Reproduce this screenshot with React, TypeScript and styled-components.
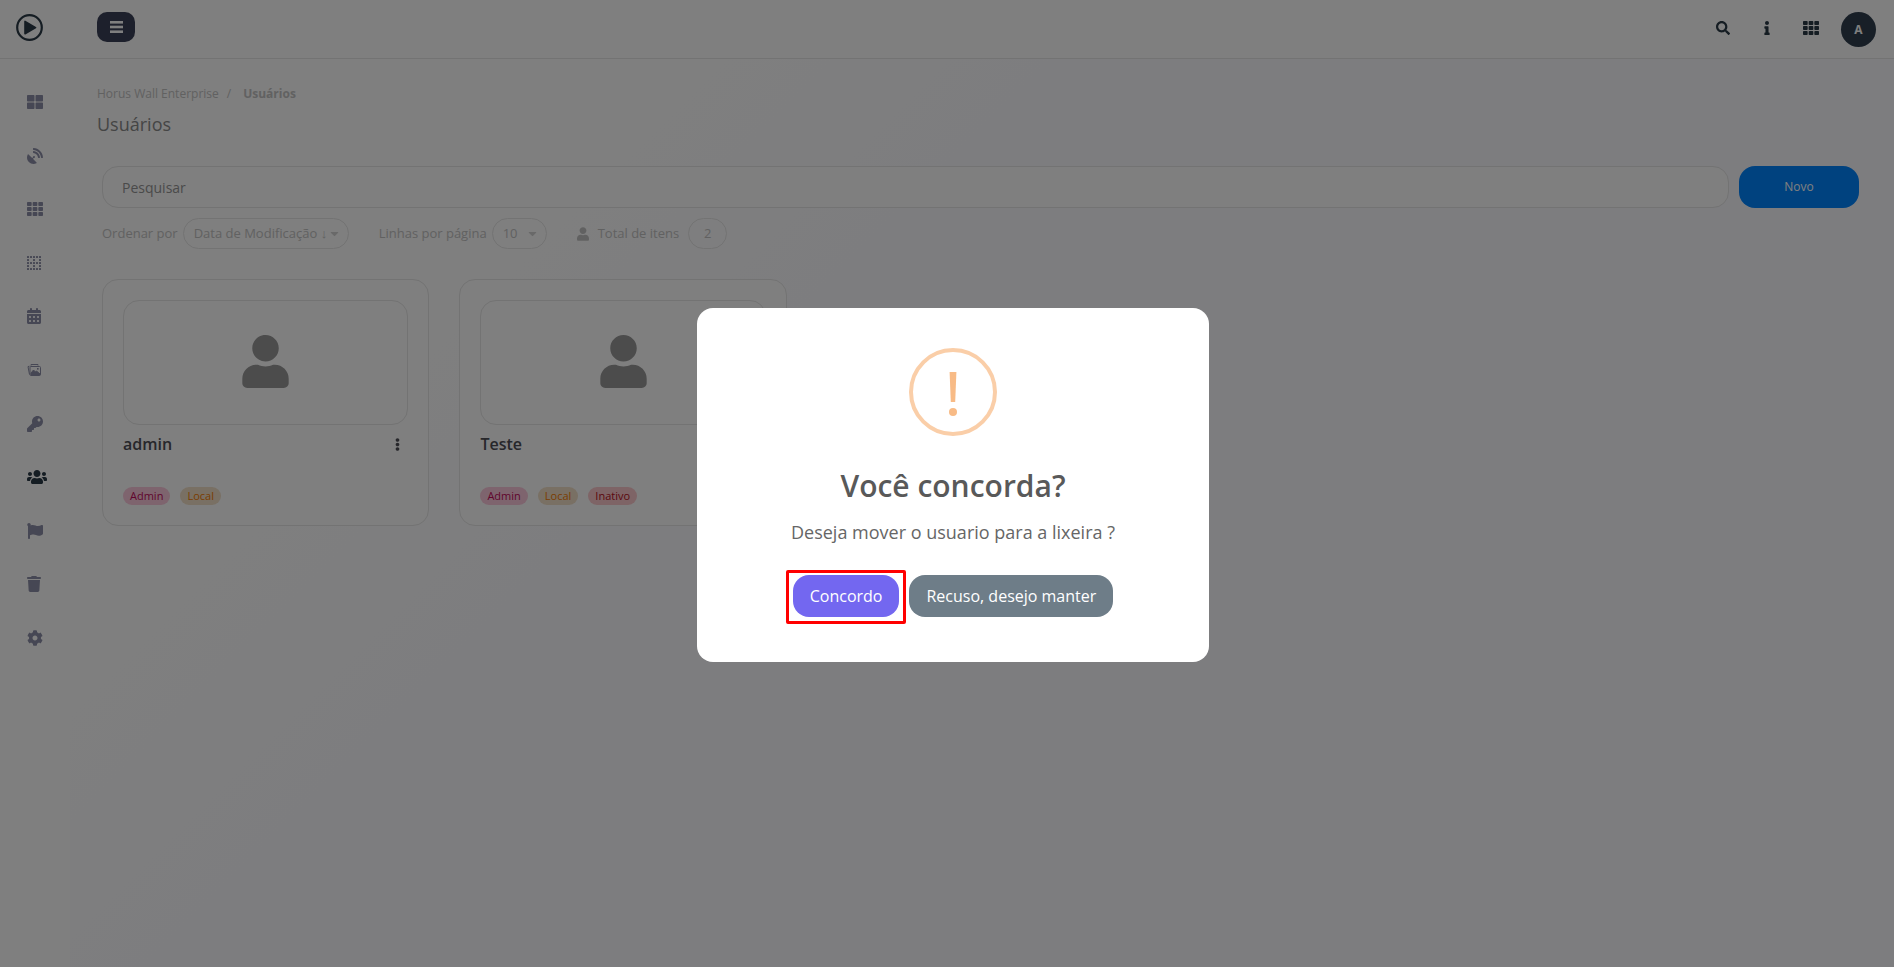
import React from "react";
import styled, { createGlobalStyle } from "styled-components";
import {
  FaBorderNone,
  FaCaretDown,
  FaCog,
  FaEllipsisV,
  FaFlag,
  FaInfo,
  FaKey,
  FaSatelliteDish,
  FaSearch,
  FaTh,
  FaThLarge,
  FaUser,
  FaUsers,
} from "react-icons/fa";
import { FaCalendarDays, FaTrash } from "react-icons/fa6";

const Global = createGlobalStyle`
  * { box-sizing: border-box; }
  body {
    margin: 0;
    font-family: "Open Sans", sans-serif;
    background: #fefefe;
  }
  button, input, select { font-family: inherit; }
`;

const Page = styled.div`
  min-height: 100vh;
  display: flex;
  flex-direction: column;
`;

const Header = styled.header`
  display: flex;
  align-items: center;
  height: 59px;
  padding: 0 18px 0 16px;
  background: #fefefe;
  border-bottom: 1px solid #e6e6e6;
`;

const Logo = styled.svg`
  width: 27px;
  height: 27px;
  margin-bottom: 4px;
  color: #2b3a47;
`;

const MenuButton = styled.button`
  width: 38px;
  height: 30px;
  margin: 0 auto 4px 54px;
  padding: 0;
  display: grid;
  place-items: center;
  border: 0;
  border-radius: 10px;
  background: #3b4158;
  color: #fff;
  svg { width: 13px; height: 12px; }
`;

const Tool = styled.button<{ $size: number }>`
  display: grid;
  place-items: center;
  width: 44px;
  height: 40px;
  padding: 0 0 2px;
  border: 0;
  background: none;
  color: #2b3a47;
  font-size: ${(p) => p.$size}px;
`;

const Avatar = styled.button`
  width: 35px;
  height: 35px;
  margin-left: 8px;
  padding: 0;
  border: 0;
  border-radius: 50%;
  background: #303f4f;
  color: #fff;
  font-size: 12px;
  font-weight: 700;
`;

const Body = styled.div`
  flex: 1;
  display: flex;
`;

const Sidebar = styled.nav`
  width: 70px;
  flex: none;
`;

const SideList = styled.ul`
  display: flex;
  flex-direction: column;
  justify-content: space-between;
  height: 568px;
  margin: 27px 0 0;
  padding: 0 0 0 27px;
  list-style: none;
`;

const SideLink = styled.a<{ $active?: boolean; $width: number }>`
  display: flex;
  align-items: center;
  height: 32px;
  color: ${(p) => (p.$active ? "#2b3a47" : "#8d8fa8")};
  svg { width: ${(p) => p.$width}px; height: 16px; }
`;

const Main = styled.main`
  flex: 1;
  min-width: 0;
  padding: 25px 35px 24px 27px;
  background: linear-gradient(135deg, #fefefe 24%, #fafaff 40%);
`;

const Crumbs = styled.nav`
  display: flex;
  gap: 8px;
  font-size: 12px;
  line-height: 20px;
  color: #c3c3c3;
  a { color: inherit; text-decoration: none; }
  strong { margin-left: 4px; }
`;

const Title = styled.h1`
  margin: 8px 0 30px;
  font-size: 18px;
  line-height: 24px;
  font-weight: 400;
  color: #8b8b8b;
`;

const Content = styled.div`
  padding-left: 5px;
`;

const SearchRow = styled.div`
  display: flex;
  gap: 10px;
`;

const SearchInput = styled.input`
  flex: 1;
  min-width: 0;
  height: 42px;
  padding: 0 19px;
  border: 1px solid #e6e6e6;
  border-radius: 16px;
  background: #fefefe;
  font-size: 14px;
  &::placeholder { color: #959595; opacity: 1; }
`;

const NewButton = styled.button`
  width: 120px;
  height: 42px;
  padding: 0 0 2px;
  border: 0;
  border-radius: 16px;
  background: #0084fe;
  color: #fff;
  font-size: 12px;
`;

const Filters = styled.div`
  display: flex;
  gap: 30px;
  margin-top: 10px;
  font-size: 13px;
  line-height: 20px;
  color: #c3c3c3;
`;

const Field = styled.div`
  display: flex;
  align-items: center;
  gap: 5px;
  label { height: 22px; }
`;

const SelectBox = styled.div`
  position: relative;
  height: 31px;
  svg {
    position: absolute;
    right: 8px;
    top: 9px;
    color: #d2d2d2;
    pointer-events: none;
  }
`;

const Select = styled.select<{ $width: number }>`
  appearance: none;
  display: block;
  width: ${(p) => p.$width}px;
  height: 31px;
  padding: 0 10px 1px;
  border: 1px solid #e6e6e6;
  border-radius: 16px;
  background: transparent;
  font-size: 13px;
  color: inherit;
`;

const Total = styled.div`
  display: flex;
  align-items: center;
  gap: 9px;
  svg { width: 12px; height: 14px; }
`;

const TotalLabel = styled.span`
  height: 22px;
`;

const Count = styled.span`
  width: 39px;
  height: 31px;
  display: grid;
  place-items: center;
  padding-bottom: 1px;
  border: 1px solid #e6e6e6;
  border-radius: 16px;
`;

const Cards = styled.div`
  display: grid;
  grid-template-columns: repeat(5, minmax(0, 1fr));
  column-gap: 30px;
  margin-top: 30px;
`;

const Card = styled.article`
  padding: 20px;
  border: 1px solid #e6e6e6;
  border-radius: 16px;
  background: #fefefe;
`;

const Photo = styled.div`
  height: 125px;
  display: grid;
  place-items: center;
  padding-bottom: 2px;
  border: 1px solid #e6e6e6;
  border-radius: 16px;
  color: #989898;
  font-size: 53px;
`;

const NameRow = styled.div`
  display: flex;
  align-items: center;
  justify-content: space-between;
  height: 38px;
`;

const Name = styled.h2`
  margin: 0;
  font-size: 16px;
  line-height: 24px;
  font-weight: 600;
  color: #4e4e56;
`;

const More = styled.button`
  display: grid;
  place-items: center;
  width: 22px;
  height: 24px;
  padding: 0;
  border: 0;
  background: none;
  color: #4e4e56;
  font-size: 13px;
`;

const Tags = styled.div`
  display: flex;
  gap: 10px;
  margin: 24px 0 0;
`;

const tones = {
  Admin: ["#fcc8dc", "#c2085b"],
  Local: ["#f2e0c8", "#f57c00"],
  Inativo: ["#fcc8cc", "#b8101c"],
};

type Tone = keyof typeof tones;

const Tag = styled.span<{ $tone: Tone }>`
  padding: 0 7px;
  border-radius: 9px;
  font-size: 11px;
  line-height: 18px;
  font-weight: 500;
  background: ${(p) => tones[p.$tone][0]};
  color: ${(p) => tones[p.$tone][1]};
`;

const Overlay = styled.div`
  position: fixed;
  inset: 0;
  display: grid;
  place-items: center;
  padding: 3px 0 0 12px;
  background: rgba(0, 0, 0, 0.5);
`;

const Dialog = styled.section`
  width: 512px;
  max-width: 100%;
  display: flex;
  flex-direction: column;
  align-items: center;
  padding: 40px 20px 45px;
  border-radius: 16px;
  background: #fff;
  text-align: center;
`;

const Warning = styled.svg`
  width: 88px;
  height: 88px;
`;

const DialogTitle = styled.h2`
  margin: 28px 0 0;
  font-size: 30px;
  line-height: 44px;
  font-weight: 600;
  color: #595959;
`;

const DialogText = styled.p`
  margin: 11px 0 30px;
  font-size: 18px;
  line-height: 26px;
  color: #666;
`;

const Actions = styled.div`
  display: flex;
  gap: 10px;
`;

const Highlight = styled.div`
  position: relative;
  &::after {
    content: "";
    position: absolute;
    inset: -5px -7px -7px;
    border: 3px solid #f00;
    border-radius: 2px;
    pointer-events: none;
  }
`;

const Action = styled.button<{ $color: string }>`
  display: block;
  height: 42px;
  padding: 0 17px;
  border: 0;
  border-radius: 16px;
  background: ${(p) => p.$color};
  color: #fff;
  font-size: 16px;
  font-weight: 500;
`;

const BarsIcon = () => (
  <svg viewBox="0 0 13 12" fill="currentColor" aria-hidden="true">
    <rect width="13" height="2.6" y="0" />
    <rect width="13" height="2.6" y="4.7" />
    <rect width="13" height="2.6" y="9.4" />
  </svg>
);

const PhotosIcon = () => (
  <svg viewBox="0 0 14 16" fill="none" stroke="currentColor">
    <path d="M2.5 12.5 1 4.6 2.5 4.2M4 3.6V2.5h7v1" />
    <rect x="3" y="4.5" width="10.5" height="9" rx="1" />
    <path d="M4 13v-2l2.5-3 2 2 1-1 3.5 3v1z" fill="currentColor" />
    <rect x="10" y="6" width="1.6" height="1.6" fill="currentColor" stroke="none" />
  </svg>
);

const nav = [
  { label: "Painel", Icon: FaThLarge, width: 16 },
  { label: "Transmissões", Icon: FaSatelliteDish, width: 16 },
  { label: "Paredes", Icon: FaTh, width: 16 },
  { label: "Layouts", Icon: FaBorderNone, width: 14 },
  { label: "Agenda", Icon: FaCalendarDays, width: 14 },
  { label: "Imagens", Icon: PhotosIcon, width: 14 },
  { label: "Chaves", Icon: FaKey, width: 16 },
  { label: "Usuários", Icon: FaUsers, width: 20, active: true },
  { label: "Relatórios", Icon: FaFlag, width: 16 },
  { label: "Lixeira", Icon: FaTrash, width: 14 },
  { label: "Configurações", Icon: FaCog, width: 16 },
];

const users: { name: string; tags: Tone[] }[] = [
  { name: "admin", tags: ["Admin", "Local"] },
  { name: "Teste", tags: ["Admin", "Local", "Inativo"] },
];

export default function App() {
  return (
    <>
      <Global />
      <Page>
        <Header>
          <Logo viewBox="0 0 27 27" aria-hidden="true">
            <circle cx="13.5" cy="13.5" r="12.3" fill="none" stroke="currentColor" strokeWidth="2.2" />
            <path
              d="M9 7.4v12.4L19.6 13.6z"
              fill="currentColor"
              stroke="currentColor"
              strokeWidth="1.6"
              strokeLinejoin="round"
            />
          </Logo>
          <MenuButton aria-label="Menu"><BarsIcon /></MenuButton>
          <Tool $size={14} aria-label="Buscar"><FaSearch /></Tool>
          <Tool $size={14} aria-label="Informações"><FaInfo /></Tool>
          <Tool $size={16} aria-label="Aplicativos"><FaTh /></Tool>
          <Avatar>A</Avatar>
        </Header>
        <Body>
          <Sidebar>
            <SideList>
              {nav.map(({ label, Icon, width, active }) => (
                <li key={label}>
                  <SideLink href="#" aria-label={label} $active={active} $width={width}>
                    <Icon />
                  </SideLink>
                </li>
              ))}
            </SideList>
          </Sidebar>
          <Main>
            <Crumbs>
              <a href="#">Horus Wall Enterprise</a>
              <span>/</span>
              <strong>Usuários</strong>
            </Crumbs>
            <Title>Usuários</Title>
            <Content>
              <SearchRow>
                <SearchInput type="search" placeholder="Pesquisar" aria-label="Pesquisar" />
                <NewButton>Novo</NewButton>
              </SearchRow>
              <Filters>
                <Field>
                  <label htmlFor="order">Ordenar por</label>
                  <SelectBox>
                    <Select id="order" $width={166}>
                      <option>Data de Modificação ↓</option>
                    </Select>
                    <FaCaretDown />
                  </SelectBox>
                </Field>
                <Field>
                  <label htmlFor="lines">Linhas por página</label>
                  <SelectBox>
                    <Select id="lines" $width={55}>
                      <option>10</option>
                    </Select>
                    <FaCaretDown />
                  </SelectBox>
                </Field>
                <Total>
                  <FaUser />
                  <TotalLabel>Total de itens</TotalLabel>
                  <Count>2</Count>
                </Total>
              </Filters>
              <Cards>
                {users.map((user) => (
                  <Card key={user.name}>
                    <Photo><FaUser /></Photo>
                    <NameRow>
                      <Name>{user.name}</Name>
                      <More aria-label="Opções"><FaEllipsisV /></More>
                    </NameRow>
                    <Tags>
                      {user.tags.map((tag) => (
                        <Tag key={tag} $tone={tag}>{tag}</Tag>
                      ))}
                    </Tags>
                  </Card>
                ))}
              </Cards>
            </Content>
          </Main>
        </Body>
      </Page>
      <Overlay>
        <Dialog role="dialog" aria-modal="true" aria-labelledby="dialog-title">
          <Warning viewBox="0 0 88 88" aria-hidden="true">
            <circle cx="44" cy="44" r="42" fill="none" stroke="#facea8" strokeWidth="4" />
            <path d="M40.6 24h6.8l-1.2 30h-4.4z" fill="#f8bb86" />
            <circle cx="44" cy="64" r="4" fill="#f8bb86" />
          </Warning>
          <DialogTitle id="dialog-title">Você concorda?</DialogTitle>
          <DialogText>Deseja mover o usuario para a lixeira ?</DialogText>
          <Actions>
            <Highlight>
              <Action $color="#7367f0">Concordo</Action>
            </Highlight>
            <Action $color="#6e7d88">Recuso, desejo manter</Action>
          </Actions>
        </Dialog>
      </Overlay>
    </>
  );
}
